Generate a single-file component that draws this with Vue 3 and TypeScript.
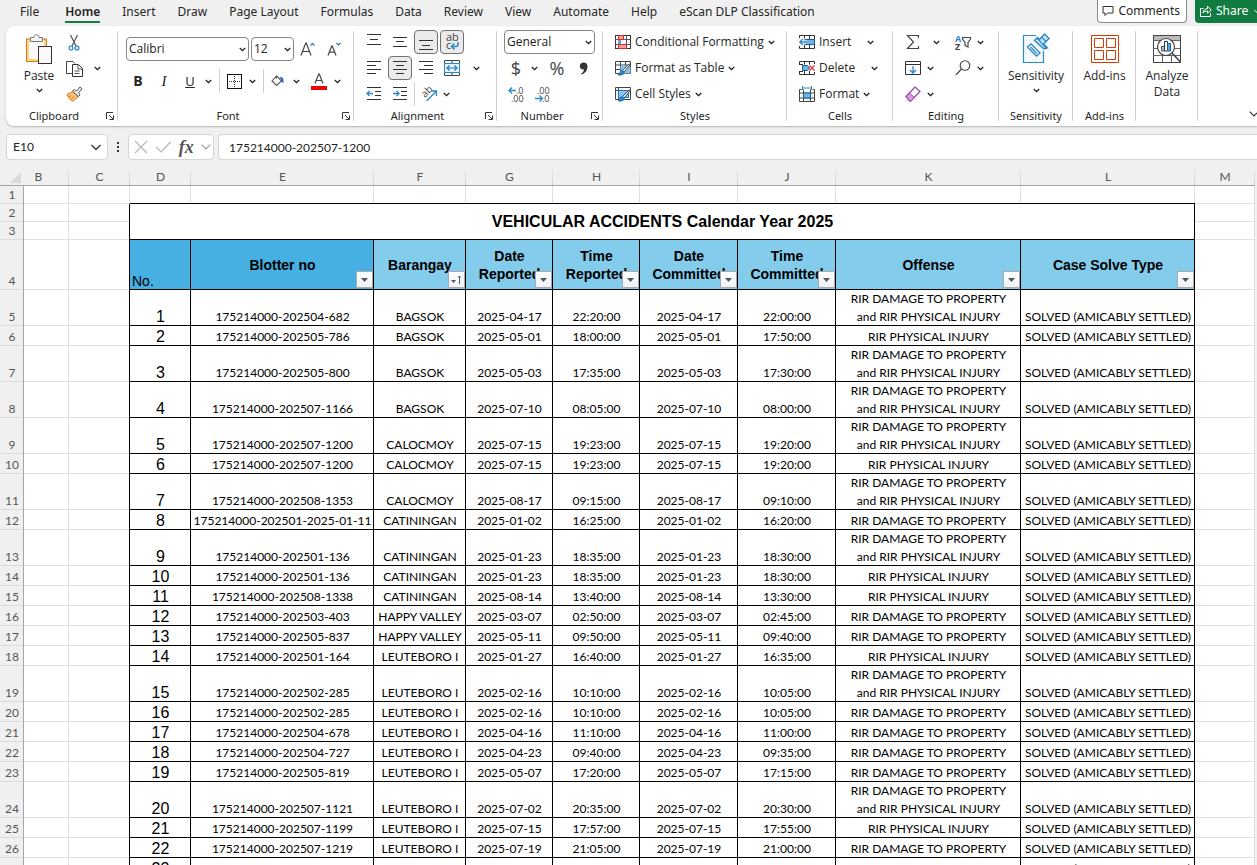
<script setup lang="ts">
import { ref } from 'vue'

interface Accident {
  no: number
  blotter: string
  barangay: string
  dateReported: string
  timeReported: string
  dateCommitted: string
  timeCommitted: string
  offense: string
  solve: string
}

const tabs = ['File', 'Home', 'Insert', 'Draw', 'Page Layout', 'Formulas', 'Data', 'Review', 'View', 'Automate', 'Help', 'eScan DLP Classification']
const activeTab = ref('Home')

const fontName = ref('Calibri')
const fontSize = ref('12')
const numberFormat = ref('General')
const nameBox = ref('E10')
const formula = ref('175214000-202507-1200')

const letters = ['B', 'C', 'D', 'E', 'F', 'G', 'H', 'I', 'J', 'K', 'L', 'M']

const headings = [
  { lines: ['Blotter no'], strong: true, sorted: false },
  { lines: ['Barangay'], strong: false, sorted: true },
  { lines: ['Date', 'Reported'], strong: false, sorted: false },
  { lines: ['Time', 'Reported'], strong: false, sorted: false },
  { lines: ['Date', 'Committed'], strong: false, sorted: false },
  { lines: ['Time', 'Committed'], strong: false, sorted: false },
  { lines: ['Offense'], strong: false, sorted: false },
  { lines: ['Case Solve Type'], strong: false, sorted: false },
]

const DAMAGE = 'RIR DAMAGE TO PROPERTY'
const INJURY = 'RIR PHYSICAL INJURY'
const BOTH = 'RIR DAMAGE TO PROPERTY\nand RIR PHYSICAL INJURY'
const SOLVED = 'SOLVED (AMICABLY SETTLED)'

const source: [string, string, string, string, string, string, string][] = [
  ['175214000-202504-682', 'BAGSOK', '2025-04-17', '22:20:00', '2025-04-17', '22:00:00', BOTH],
  ['175214000-202505-786', 'BAGSOK', '2025-05-01', '18:00:00', '2025-05-01', '17:50:00', INJURY],
  ['175214000-202505-800', 'BAGSOK', '2025-05-03', '17:35:00', '2025-05-03', '17:30:00', BOTH],
  ['175214000-202507-1166', 'BAGSOK', '2025-07-10', '08:05:00', '2025-07-10', '08:00:00', BOTH],
  ['175214000-202507-1200', 'CALOCMOY', '2025-07-15', '19:23:00', '2025-07-15', '19:20:00', BOTH],
  ['175214000-202507-1200', 'CALOCMOY', '2025-07-15', '19:23:00', '2025-07-15', '19:20:00', INJURY],
  ['175214000-202508-1353', 'CALOCMOY', '2025-08-17', '09:15:00', '2025-08-17', '09:10:00', BOTH],
  ['175214000-202501-2025-01-11', 'CATININGAN', '2025-01-02', '16:25:00', '2025-01-02', '16:20:00', DAMAGE],
  ['175214000-202501-136', 'CATININGAN', '2025-01-23', '18:35:00', '2025-01-23', '18:30:00', BOTH],
  ['175214000-202501-136', 'CATININGAN', '2025-01-23', '18:35:00', '2025-01-23', '18:30:00', INJURY],
  ['175214000-202508-1338', 'CATININGAN', '2025-08-14', '13:40:00', '2025-08-14', '13:30:00', INJURY],
  ['175214000-202503-403', 'HAPPY VALLEY', '2025-03-07', '02:50:00', '2025-03-07', '02:45:00', DAMAGE],
  ['175214000-202505-837', 'HAPPY VALLEY', '2025-05-11', '09:50:00', '2025-05-11', '09:40:00', DAMAGE],
  ['175214000-202501-164', 'LEUTEBORO I', '2025-01-27', '16:40:00', '2025-01-27', '16:35:00', INJURY],
  ['175214000-202502-285', 'LEUTEBORO I', '2025-02-16', '10:10:00', '2025-02-16', '10:05:00', BOTH],
  ['175214000-202502-285', 'LEUTEBORO I', '2025-02-16', '10:10:00', '2025-02-16', '10:05:00', DAMAGE],
  ['175214000-202504-678', 'LEUTEBORO I', '2025-04-16', '11:10:00', '2025-04-16', '11:00:00', DAMAGE],
  ['175214000-202504-727', 'LEUTEBORO I', '2025-04-23', '09:40:00', '2025-04-23', '09:35:00', DAMAGE],
  ['175214000-202505-819', 'LEUTEBORO I', '2025-05-07', '17:20:00', '2025-05-07', '17:15:00', DAMAGE],
  ['175214000-202507-1121', 'LEUTEBORO I', '2025-07-02', '20:35:00', '2025-07-02', '20:30:00', BOTH],
  ['175214000-202507-1199', 'LEUTEBORO I', '2025-07-15', '17:57:00', '2025-07-15', '17:55:00', INJURY],
  ['175214000-202507-1219', 'LEUTEBORO I', '2025-07-19', '21:05:00', '2025-07-19', '21:00:00', DAMAGE],
  ['', '', '', '', '', '', ''],
]

const accidents: Accident[] = source.map((r, i) => ({
  no: i + 1,
  blotter: r[0],
  barangay: r[1],
  dateReported: r[2],
  timeReported: r[3],
  dateCommitted: r[4],
  timeCommitted: r[5],
  offense: r[6],
  solve: SOLVED,
}))
</script>

<template>
  <div class="app">
    <svg class="sprite" aria-hidden="true">
      <symbol id="chev" viewBox="0 0 7 5"><path d="M.8 1 3.5 3.7 6.2 1" fill="none" stroke="#222" stroke-width="1.3" /></symbol>
      <symbol id="launch" viewBox="0 0 8 8"><path d="M.5 7V.5H7M3 3l4 4M7.5 3.5v4h-4" fill="none" stroke="#333" /></symbol>
      <symbol id="brush" viewBox="0 0 16 16">
        <path d="M15.5 4.5 9 12 7.5 10.5 14 4.2z" fill="#fff" stroke="#444" />
        <path d="M3 14.8c2-.3 1.6-3.4 3.6-4.1 1.5-.4 2.8.8 2.5 2.2-.4 2-3.8 2.8-6.1 1.9z" fill="#2b88c8" stroke="#1467ab" stroke-width=".8" />
      </symbol>
    </svg>

    <header class="tabbar">
      <nav class="tabs" aria-label="Ribbon tabs">
        <button v-for="t in tabs" :key="t" class="tab" :class="{ active: t === activeTab }" @click="activeTab = t">{{ t }}</button>
      </nav>
      <div class="tabactions">
        <button class="comments">
          <svg width="12" height="12" viewBox="0 0 12 12"><path d="M1 1.5h10v6.500H5.500L3 10.500V8H1z" fill="none" stroke="#333" /></svg>
          Comments
        </button>
        <button class="share">
          <svg width="12" height="12" viewBox="0 0 12 12"><path d="M3.500 3.500h-3v8h10V8M3 8c.3-3 2-4.300 4.500-4.300V1.300L11.300 5 7.500 8.300V6C5.500 6 4 6.500 3 8z" fill="none" stroke="#fff" /></svg>
          Share
          <svg class="sharemore" width="7" height="5" viewBox="0 0 7 5"><path d="M.5 1l3 3 3-3" fill="none" stroke="#fff" /></svg>
        </button>
      </div>
    </header>

    <div class="ribbon">
      <section class="group g-clip" aria-label="Clipboard">
        <div class="body cols">
          <button class="big paste">
            <svg width="28" height="30" viewBox="0 0 28 30">
              <rect x="1.500" y="5" width="20" height="22.500" fill="#fbd48c" stroke="#e07a10" />
              <rect x="4" y="7" width="15" height="18" fill="#fafafa" />
              <path d="M5.500 7.500v-4h3.500c.3-2 1.200-2.800 2.500-2.800s2.200.8 2.500 2.800h3.500v4z" fill="#f5f5f5" stroke="#777" />
              <rect x="13.500" y="12.500" width="13" height="17" fill="#fafafa" stroke="#333" />
            </svg>
            <span>Paste</span>
            <svg class="chev" width="7" height="5"><use href="#chev" /></svg>
          </button>
          <div class="stack">
            <div class="row">
              <button class="ib" aria-label="Cut">
                <svg width="12" height="17" viewBox="0 0 12 17"><path d="M2.500 1l5.500 11M9.500 1L4 12" stroke="#555" stroke-width="1.200" fill="none" /><circle cx="3" cy="14" r="1.900" fill="none" stroke="#2b88c8" stroke-width="1.300" /><circle cx="9" cy="14" r="1.900" fill="none" stroke="#2b88c8" stroke-width="1.300" /></svg>
              </button>
            </div>
            <div class="row">
              <button class="ib" aria-label="Copy">
                <svg width="17" height="17" viewBox="0 0 17 17"><path d="M6 13.500H.5v-12h6.500l2 2" fill="none" stroke="#444" /><path d="M6.500 4.500h6l4 4v8h-10z" fill="#fff" stroke="#333" /><path d="M12 4.500V9h4.500M8.500 11h5M8.500 13.500h5" fill="none" stroke="#555" /></svg>
              </button>
              <button class="cb lead" aria-label="Copy options"><svg class="chev" width="7" height="5"><use href="#chev" /></svg></button>
            </div>
            <div class="row">
              <button class="ib" aria-label="Format Painter">
                <svg width="17" height="16" viewBox="0 0 17 16"><path d="M1 8.500l6-3 5 5.500-5.500 4.500c-1.500-1-4-3.500-5.500-7z" fill="#fbc27a" stroke="#dd7711" /><path d="M3 11l2-1.500M5 13.500l3-3" stroke="#dd7711" /><path d="M6.500 5l1.800-1.500 2.200 1.500L14 1l2 1.700-3.300 4L14 9l-1.700 1.500z" fill="#eee" stroke="#555" /></svg>
              </button>
            </div>
          </div>
        </div>
        <div class="foot has"><span>Clipboard</span><button class="launch" aria-label="Clipboard settings"><svg width="8" height="8"><use href="#launch" /></svg></button></div>
      </section>

      <section class="group g-font" aria-label="Font">
        <div class="body two">
          <div class="row">
            <div class="drop w-font"><select v-model="fontName" aria-label="Font name"><option>Calibri</option><option>Arial</option></select><svg class="chev" width="7" height="5"><use href="#chev" /></svg></div>
            <div class="drop w-size"><select v-model="fontSize" aria-label="Font size"><option>12</option><option>14</option></select><svg class="chev" width="7" height="5"><use href="#chev" /></svg></div>
            <button class="ib" aria-label="Increase font size"><svg width="16" height="16" viewBox="0 0 16 16"><path d="M1 14.500L5.700 2h.6L11 14.500M2.700 10.500h6.600" fill="none" stroke="#444" stroke-width="1.200" /><path d="M10.500 4.500l2-2 2 2" fill="none" stroke="#2b88c8" stroke-width="1.300" /></svg></button>
            <button class="ib" aria-label="Decrease font size"><svg width="14" height="14" viewBox="0 0 14 14"><path d="M1 13.500L4.700 4h.6L9 13.500M2.300 10.200h5.400" fill="none" stroke="#444" stroke-width="1.200" /><path d="M9.500 1l2 2 2-2" fill="none" stroke="#2b88c8" stroke-width="1.300" /></svg></button>
          </div>
          <div class="row">
            <button class="ib glyph b">B</button>
            <button class="ib glyph i">I</button>
            <button class="ib glyph u">U</button>
            <button class="cb" aria-label="Underline options"><svg class="chev" width="7" height="5"><use href="#chev" /></svg></button>
            <i class="sep"></i>
            <button class="ib" aria-label="Borders"><svg width="15" height="15" viewBox="0 0 15 15" shape-rendering="crispEdges"><rect x=".5" y=".5" width="14" height="14" fill="#fff" stroke="#111" /><path d="M7.500 2v12M2 7.500h12" stroke="#333" stroke-dasharray="1 1" /></svg></button>
            <button class="cb" aria-label="Border options"><svg class="chev" width="7" height="5"><use href="#chev" /></svg></button>
            <i class="sep"></i>
            <button class="ib" aria-label="Fill color"><svg width="14" height="16" viewBox="0 0 14 16"><path d="M5.500 2.500v3M5.500 3L1 8l4.500 4.500L10.500 8 6 3.200z" fill="#fff" stroke="#555" stroke-width="1.100" /><path d="M8.500 4c2-.5 4 .5 4 3.500v2.500c-2-.3-2.300-2-2.300-3.500z" fill="#1b6ec2" /></svg></button>
            <button class="cb" aria-label="Fill options"><svg class="chev" width="7" height="5"><use href="#chev" /></svg></button>
            <button class="ib lead" aria-label="Font color"><svg width="16" height="17" viewBox="0 0 16 17"><path d="M4 10.500L7.700 1h.6L12 10.500M5.300 7.500h5.400" fill="none" stroke="#444" stroke-width="1.200" /><rect y="13" width="16" height="4" fill="#f00000" /></svg></button>
            <button class="cb" aria-label="Font color options"><svg class="chev" width="7" height="5"><use href="#chev" /></svg></button>
          </div>
        </div>
        <div class="foot has"><span>Font</span><button class="launch" aria-label="Font settings"><svg width="8" height="8"><use href="#launch" /></svg></button></div>
      </section>

      <section class="group g-align" aria-label="Alignment">
        <div class="body">
          <div class="row">
            <button class="ib" aria-label="Top align"><svg width="16" height="16" viewBox="0 0 16 16"><path d="M1 .5h14M4 5.500h8M1 10.500h14" stroke="#333" /></svg></button>
            <button class="ib" aria-label="Middle align"><svg width="16" height="16" viewBox="0 0 16 16"><path d="M1 3.500h14M4 7.500h8M1 12.500h14" stroke="#333" /></svg></button>
            <button class="ib on" aria-label="Bottom align"><svg width="16" height="16" viewBox="0 0 16 16"><path d="M1 6.500h14M4 11.500h8M1 15.500h14" stroke="#333" /></svg></button>
            <button class="ib on" aria-label="Wrap text">
              <svg width="16" height="18" viewBox="0 0 16 18"><text x="2" y="8" class="mini" font-size="11">ab</text><text x="2" y="16" class="mini" font-size="11">c</text><path d="M14 9v2.500c0 1.500-1 2-2.500 2H8M10.500 10.500l-3 3 3 3" fill="none" stroke="#2b88c8" stroke-width="1.500" /></svg>
            </button>
          </div>
          <div class="row">
            <button class="ib" aria-label="Align left"><svg width="16" height="16" viewBox="0 0 16 16"><path d="M1 1.500h14M1 5.500h9M1 9.500h14M1 13.500h9" stroke="#333" /></svg></button>
            <button class="ib on" aria-label="Center"><svg width="16" height="16" viewBox="0 0 16 16"><path d="M1 1.500h14M4 5.500h8M1 9.500h14M4 13.500h8" stroke="#333" /></svg></button>
            <button class="ib" aria-label="Align right"><svg width="16" height="16" viewBox="0 0 16 16"><path d="M1 1.500h14M6 5.500h9M1 9.500h14M6 13.500h9" stroke="#333" /></svg></button>
            <button class="ib" aria-label="Merge and center"><svg width="16" height="16" viewBox="0 0 16 16"><path d="M.5.500h15v15H.5zM8 .5v3M8 12.500v3" fill="#fff" stroke="#444" /><rect x=".5" y="3.500" width="15" height="9" fill="#e6f2fb" stroke="#2b88c8" /><path d="M3 8h10M5.500 5.500L3 8l2.500 2.500M10.500 5.500L13 8l-2.500 2.500" fill="none" stroke="#1b78c2" stroke-width="1.200" /></svg></button>
            <button class="cb wide" aria-label="Merge options"><svg class="chev" width="7" height="5"><use href="#chev" /></svg></button>
          </div>
          <div class="row">
            <button class="ib" aria-label="Decrease indent"><svg width="16" height="16" viewBox="0 0 16 16"><path d="M1 1.500h14M9 5.500h6M9 9.500h6M1 13.500h14" stroke="#333" /><path d="M1 7.500h6M3.500 5L1 7.500 3.500 10" fill="none" stroke="#2b88c8" stroke-width="1.300" /></svg></button>
            <button class="ib" aria-label="Increase indent"><svg width="16" height="16" viewBox="0 0 16 16"><path d="M1 1.500h14M9 5.500h6M9 9.500h6M1 13.500h14" stroke="#333" /><path d="M1 7.500h6M4.500 5L7 7.500 4.500 10" fill="none" stroke="#2b88c8" stroke-width="1.300" /></svg></button>
            <i class="sep tight"></i>
            <button class="ib narrow" aria-label="Orientation"><svg width="16" height="16" viewBox="0 0 16 16"><text class="mini" font-size="10" transform="translate(4 12) rotate(-45)">ab</text><path d="M5.500 15L15 5.500M10.500 5h5v5" fill="none" stroke="#2b88c8" stroke-width="1.300" /></svg></button>
            <button class="cb" aria-label="Orientation options"><svg class="chev" width="7" height="5"><use href="#chev" /></svg></button>
          </div>
        </div>
        <div class="foot has"><span>Alignment</span><button class="launch" aria-label="Alignment settings"><svg width="8" height="8"><use href="#launch" /></svg></button></div>
      </section>

      <section class="group g-num" aria-label="Number">
        <div class="body">
          <div class="row">
            <div class="drop w-num"><select v-model="numberFormat" aria-label="Number format"><option>General</option><option>Text</option></select><svg class="chev" width="7" height="5"><use href="#chev" /></svg></div>
          </div>
          <div class="row">
            <button class="ib glyph sym">$</button>
            <button class="cb" aria-label="Currency options"><svg class="chev" width="7" height="5"><use href="#chev" /></svg></button>
            <button class="ib glyph sym lead">%</button>
            <button class="ib" aria-label="Comma style"><svg width="9" height="13" viewBox="0 0 9 13"><path d="M4.500.500C7 .5 8.500 2 8.500 4.500c0 4-2.500 7-6 8l-.5-.8C4 10.500 5 9 5 7.500 2.500 8 .8 6.500.8 4.300.8 2 2.500.5 4.500.5z" fill="#333" /></svg></button>
          </div>
          <div class="row">
            <button class="ib" aria-label="Increase decimal"><svg width="16" height="16" viewBox="0 0 16 16"><text x="8" y="8" class="mini" font-size="9">.0</text><text x="3" y="16" class="mini" font-size="9">.00</text><path d="M1 4.500h7M4 1.500l-3 3 3 3" fill="none" stroke="#2b88c8" stroke-width="1.300" /></svg></button>
            <button class="ib" aria-label="Decrease decimal"><svg width="16" height="16" viewBox="0 0 16 16"><text x="3" y="8" class="mini" font-size="9">.00</text><text x="8" y="16" class="mini" font-size="9">.0</text><path d="M1 12.500h7M5.500 9.500l3 3-3 3" fill="none" stroke="#2b88c8" stroke-width="1.300" /></svg></button>
          </div>
        </div>
        <div class="foot has"><span>Number</span><button class="launch" aria-label="Number settings"><svg width="8" height="8"><use href="#launch" /></svg></button></div>
      </section>

      <section class="group g-styles" aria-label="Styles">
        <div class="body">
          <div class="row">
            <button class="lb">
              <svg width="16" height="14" viewBox="0 0 16 14" shape-rendering="crispEdges"><rect x=".5" y=".5" width="15" height="13" fill="#fff" stroke="#333" /><path d="M3.500 0v14M11.500 0v14M0 4.500h16M0 9.500h16" stroke="#555" fill="none" /><rect x="4" y="5" width="7" height="4" fill="#fff" /><rect x="3.500" y=".5" width="5" height="4" fill="#f6a0a0" stroke="#d92b2b" /><rect x="3" y="5" width="3" height="4" fill="#5aa7e0" /><rect x="3.500" y="9.500" width="8" height="4" fill="#f6a0a0" stroke="#d92b2b" /></svg>
              <span>Conditional Formatting</span><svg class="chev" width="7" height="5"><use href="#chev" /></svg>
            </button>
          </div>
          <div class="row">
            <button class="lb">
              <svg width="16" height="16" viewBox="0 0 16 16"><path d="M.5 1.500h15v12H.5zM.5 5h15M.5 9.500h15M5.500 1.500v12M10.500 1.500v12" fill="#fff" stroke="#444" /><path d="M5.500 5.500h10v8h-10z" fill="#8cc3ee" /><use href="#brush" width="16" height="16" /></svg>
              <span>Format as Table</span><svg class="chev" width="7" height="5"><use href="#chev" /></svg>
            </button>
          </div>
          <div class="row">
            <button class="lb">
              <svg width="16" height="16" viewBox="0 0 16 16"><path d="M.5 1.500h15v12H.5z" fill="#fff" stroke="#444" /><path d="M.5 4.500h15M3.500 1.500v12" stroke="#444" /><path d="M3.500 4.500h10v7h-10z" fill="#8cc3ee" stroke="#1b78c2" /><use href="#brush" width="16" height="16" /></svg>
              <span>Cell Styles</span><svg class="chev" width="7" height="5"><use href="#chev" /></svg>
            </button>
          </div>
        </div>
        <div class="foot"><span>Styles</span></div>
      </section>

      <section class="group g-cells" aria-label="Cells">
        <div class="body">
          <div class="row">
            <button class="lb"><svg width="16" height="14" viewBox="0 0 16 14"><path d="M.5 3V.5h15v13H.5V11M5.500.5v3M10.500.5v13M5.500 10v3.500M6 4.500h9.500M6 9.500h9.500" fill="none" stroke="#333" /><rect x="6" y="4.500" width="9.500" height="5" fill="#6db3e8" stroke="#1b5e9c" /><path d="M1 7h7M4 4L1 7l3 3" fill="none" stroke="#fff" stroke-width="3" /><path d="M.8 7H8M3.800 4L.8 7l3 3" fill="none" stroke="#2b88c8" stroke-width="1.300" /></svg><span>Insert</span></button>
            <button class="cb after" aria-label="Insert options"><svg class="chev" width="7" height="5"><use href="#chev" /></svg></button>
          </div>
          <div class="row">
            <button class="lb"><svg width="16" height="14" viewBox="0 0 16 14"><path d="M.5 3V.5h15V3M.5 11v2.500h15V11M5.500.5v3M10.500.5v3M5.500 10v3.500M10.500 10v3.500M0 3.500h4M0 10.500h4" fill="none" stroke="#333" /><path d="M3.500 4.500h5l2 2.500-2 2.500h-5z" fill="#6db3e8" stroke="#1b5e9c" /><path d="M10.500 4.500l5 5M15.500 4.500l-5 5" stroke="#e23b3b" stroke-width="1.400" /></svg><span>Delete</span></button>
            <button class="cb after" aria-label="Delete options"><svg class="chev" width="7" height="5"><use href="#chev" /></svg></button>
          </div>
          <div class="row">
            <button class="lb"><svg width="16" height="16" viewBox="0 0 16 16"><path d="M2.500 3.500H.5v12h15v-12h-2M.5 7h15M.5 12h15M4.500 3.500v12M11.500 3.500v12" fill="none" stroke="#444" /><rect x="4.500" y="7" width="7" height="5" fill="#6db3e8" stroke="#1b5e9c" /><path d="M3.500 0v4M12.500 0v4M3.500 2h9" stroke="#2b88c8" fill="none" /></svg><span>Format</span><svg class="chev" width="7" height="5"><use href="#chev" /></svg></button>
          </div>
        </div>
        <div class="foot"><span>Cells</span></div>
      </section>

      <section class="group g-edit" aria-label="Editing">
        <div class="body">
          <div class="row">
            <button class="ib narrow" aria-label="AutoSum"><svg width="14" height="16" viewBox="0 0 14 16"><path d="M12.500 4V1.500H1.500L7.500 8l-6 6.500h11V12" fill="none" stroke="#444" stroke-width="1.200" /></svg></button>
            <button class="cb sumc" aria-label="AutoSum options"><svg class="chev" width="7" height="5"><use href="#chev" /></svg></button>
            <button class="ib narrow far" aria-label="Sort and filter"><svg width="18" height="17" viewBox="0 0 18 17"><text x="1" y="8" class="mini az" font-size="9">A</text><text x="1" y="16" class="mini zz" font-size="9">Z</text><path d="M8.500 3.500h8v1.500L14 8.500v4.500l-3-1.500v-3L8.500 5z" fill="none" stroke="#444" stroke-width="1.200" /></svg></button>
            <button class="cb" aria-label="Sort options"><svg class="chev" width="7" height="5"><use href="#chev" /></svg></button>
          </div>
          <div class="row">
            <button class="ib narrow" aria-label="Fill"><svg width="16" height="14" viewBox="0 0 16 14"><path d="M.5.500h15v13H.5zM.5 3.500h15" fill="#fff" stroke="#333" /><path d="M8 5v7M5 9l3 3 3-3" fill="none" stroke="#2b88c8" stroke-width="1.300" /></svg></button>
            <button class="cb" aria-label="Fill down options"><svg class="chev" width="7" height="5"><use href="#chev" /></svg></button>
            <button class="ib narrow far2" aria-label="Find and select"><svg width="16" height="16" viewBox="0 0 16 16"><circle cx="10" cy="5.500" r="4.800" fill="none" stroke="#444" stroke-width="1.100" /><path d="M6.500 9L.8 15" stroke="#444" stroke-width="1.200" /></svg></button>
            <button class="cb" aria-label="Find options"><svg class="chev" width="7" height="5"><use href="#chev" /></svg></button>
          </div>
          <div class="row">
            <button class="ib narrow" aria-label="Clear"><svg width="16" height="16" viewBox="0 0 16 16"><path d="M1 10.500L10 1l5 4.500-9 9.500H4.500z" fill="#fff" stroke="#9b3fa5" stroke-width="1.200" /><path d="M1.200 10.500L4.500 7l4.800 4.500L6 15H4.700z" fill="#d79be0" stroke="#9b3fa5" /></svg></button>
            <button class="cb" aria-label="Clear options"><svg class="chev" width="7" height="5"><use href="#chev" /></svg></button>
          </div>
        </div>
        <div class="foot"><span>Editing</span></div>
      </section>

      <section class="group g-sens" aria-label="Sensitivity">
        <div class="body">
          <button class="big">
            <svg width="28" height="30" viewBox="0 0 28 30"><path d="M14 1.500H1.500v27h20V17" fill="#f3f9fd" stroke="#2b88c8" stroke-width="1.200" /><path d="M5.500 13l3.500-3 9 9-3.500 3zM8.500 13l6.500 6.500" fill="#fff" stroke="#2b88c8" stroke-width="1.300" /><path d="M12.500 6.500l3-3 2 2L22.500 0l4.500 4.500-5.500 5.500 4 4-3.500 1z" fill="#cfe6f7" stroke="#2b88c8" stroke-width="1.400" /><path d="M15 4l9 10M19.500 3l4.500 4.500" fill="none" stroke="#2b88c8" stroke-width="1.200" /></svg>
            <span>Sensitivity</span>
            <svg class="chev" width="7" height="5"><use href="#chev" /></svg>
          </button>
        </div>
        <div class="foot"><span>Sensitivity</span></div>
      </section>

      <section class="group g-add" aria-label="Add-ins">
        <div class="body">
          <button class="big">
            <svg width="28" height="30" viewBox="0 0 28 30"><path d="M.5 1.500h27v27H.5zM3.500 4.500h9v9h-9zM15.500 4.500h9v9h-9zM3.500 16.500h9v9h-9zM15.500 16.500h9v9h-9z" fill="#fff" stroke="#d83b01" /></svg>
            <span>Add-ins</span>
          </button>
        </div>
        <div class="foot"><span>Add-ins</span></div>
      </section>

      <section class="group g-an" aria-label="Analysis">
        <div class="body">
          <button class="big">
            <svg width="28" height="30" viewBox="0 0 28 30"><rect x=".5" y="1.500" width="27" height="27" fill="#fff" stroke="#444" /><path d="M1 2h26v4H1z" fill="#bbb" /><path d="M.5 6.500h27M.5 14.500h27M.5 21.500h27M9.500 21v7M18.500 21v7" stroke="#666" /><circle cx="13" cy="13" r="8.500" fill="#fff" stroke="#444" stroke-width="1.200" /><path d="M19 19l8.500 9" stroke="#444" stroke-width="1.500" /><path d="M8.500 12.500h3V17h-3z" fill="#bbb" stroke="#555" /><path d="M11.500 7.500h3V17h-3z" fill="#fff" stroke="#333" /><path d="M14.500 9.500h3V17h-3z" fill="#5aa7e0" stroke="#1b5e9c" /></svg>
            <span>Analyze<br />Data</span>
          </button>
        </div>
        <div class="foot"></div>
      </section>
      <button class="collapse" aria-label="Collapse ribbon"><svg width="10" height="6" viewBox="0 0 10 6"><path d="M.7.700L5 5 9.300.7" fill="none" stroke="#333" stroke-width="1.200" /></svg></button>
    </div>

    <div class="formulabar">
      <div class="namebox">
        <input v-model="nameBox" aria-label="Name box" />
        <button aria-label="Name list"><svg width="12" height="7" viewBox="0 0 12 7"><path d="M1.500 1L6 5.500 10.500 1" fill="none" stroke="#333" stroke-width="1.300" /></svg></button>
      </div>
      <svg class="dots" width="2" height="12" viewBox="0 0 2 12"><path d="M0 1h2v2H0zM0 5h2v2H0zM0 9h2v2H0z" fill="#333" /></svg>
      <div class="fx">
        <button aria-label="Cancel"><svg width="14" height="14" viewBox="0 0 14 14"><path d="M1 1l12 12M13 1L1 13" stroke="#b5b5b5" stroke-width="1.100" /></svg></button>
        <button aria-label="Enter"><svg width="16" height="12" viewBox="0 0 16 12"><path d="M1 6l5 5L15.500 1" fill="none" stroke="#b5b5b5" stroke-width="1.200" /></svg></button>
        <button class="fxi">fx</button>
        <button aria-label="Function list"><svg width="10" height="6" viewBox="0 0 10 6"><path d="M.7.700L5 5 9.300.7" fill="none" stroke="#999" stroke-width="1.100" /></svg></button>
      </div>
      <input v-model="formula" class="formula" aria-label="Formula" />
    </div>

    <main class="sheetwrap">
      <table class="sheet">
        <colgroup>
          <col class="w-rh" /><col class="w-b" /><col class="w-c" /><col class="w-d" /><col class="w-e" /><col class="w-f" /><col class="w-g" /><col class="w-g" /><col class="w-i" /><col class="w-i" /><col class="w-k" /><col class="w-l" /><col />
        </colgroup>
        <thead>
          <tr class="letters">
            <th class="corner"><svg width="11" height="11" viewBox="0 0 11 11"><path d="M11 0v11H0z" fill="#d9d9d9" /></svg></th>
            <th v-for="l in letters" :key="l" scope="col" :class="{ partial: l === 'B' }">{{ l }}</th>
          </tr>
        </thead>
        <tbody>
          <tr class="h18"><th class="rh" scope="row">1</th><td v-for="l in letters" :key="l" :class="{ over: l !== 'B' && l !== 'C' && l !== 'M' }"></td></tr>
          <tr class="h18">
            <th class="rh" scope="row">2</th><td></td><td class="edge"></td>
            <td class="title" colspan="9" rowspan="2">VEHICULAR ACCIDENTS Calendar Year 2025</td><td></td>
          </tr>
          <tr class="h18"><th class="rh" scope="row">3</th><td></td><td class="edge"></td><td></td></tr>
          <tr class="h50">
            <th class="rh" scope="row">4</th><td></td><td class="edge"></td>
            <td class="k head strong no">No.</td>
            <td v-for="(h, i) in headings" :key="i" class="k head" :class="{ strong: h.strong }">
              <div v-for="line in h.lines" :key="line">{{ line }}</div>
              <button class="filter" :aria-label="'Filter ' + h.lines.join(' ')">
                <svg v-if="h.sorted" width="11" height="10" viewBox="0 0 11 10"><path d="M0 5h5L2.500 8z" fill="#555" /><path d="M8.500 9V1M7 2.500L8.500 1 10 2.500" fill="none" stroke="#555" /></svg>
                <svg v-else width="7" height="4" viewBox="0 0 7 4"><path d="M0 0h7L3.500 4z" fill="#555" /></svg>
              </button>
            </td>
            <td></td>
          </tr>
          <tr v-for="a in accidents" :key="a.no" :class="a.offense.includes('\n') ? 'h36' : 'h20'">
            <th class="rh" scope="row">{{ a.no + 4 }}</th><td></td><td class="edge"></td>
            <td class="k num">{{ a.no }}</td>
            <td class="k">{{ a.blotter }}</td>
            <td class="k">{{ a.barangay }}</td>
            <td class="k">{{ a.dateReported }}</td>
            <td class="k">{{ a.timeReported }}</td>
            <td class="k">{{ a.dateCommitted }}</td>
            <td class="k">{{ a.timeCommitted }}</td>
            <td class="k pre">{{ a.offense }}</td>
            <td class="k">{{ a.solve }}</td>
            <td></td>
          </tr>
        </tbody>
      </table>
    </main>
  </div>
</template>

<style>
body {
  margin: 0;
  overflow: hidden;
}
</style>

<style scoped>
.app {
  height: 100vh;
  overflow: hidden;
  display: flex;
  flex-direction: column;
  background: #f0f0f0;
  color: #262626;
  font: 12px/16px "Noto Sans", "Open Sans", sans-serif;
}
.app * {
  box-sizing: border-box;
}
.sprite {
  position: absolute;
  width: 0;
  height: 0;
}
button {
  border: 0;
  padding: 0;
  margin: 0;
  background: none;
  font: inherit;
  color: inherit;
  white-space: nowrap;
}
svg {
  flex: none;
  overflow: visible;
}
.mini {
  font-family: "Open Sans", sans-serif;
  fill: #444;
}
.az {
  fill: #2b88c8;
  font-weight: 700;
}
.zz {
  font-weight: 700;
}

/* tabs */
.tabbar {
  flex: none;
  height: 26px;
  display: flex;
  justify-content: space-between;
  align-items: flex-start;
}
.tabs {
  display: flex;
  gap: 22px;
  padding: 2px 0 0 20px;
}
.tab {
  height: 21px;
  line-height: 19px;
  border-bottom: 2px solid transparent;
}
.tab:first-child {
  margin-right: 4px;
}
.tab.active {
  font-weight: 600;
  border-bottom-color: #107c41;
}
.tabactions {
  display: flex;
  gap: 8px;
}
.comments,
.share {
  height: 23px;
  display: flex;
  align-items: center;
  gap: 4px;
  padding: 0 6px 0 4px;
  border: 1px solid #8a8a8a;
  border-top: 0;
  border-radius: 0 0 4px 4px;
  background: #fff;
}
.share {
  width: 62px;
  overflow: hidden;
  border-color: #107c41;
  border-right: 0;
  border-radius: 0 0 0 4px;
  background: #107c41;
  color: #fff;
}
.sharemore {
  margin-left: 2px;
}

/* ribbon */
.ribbon {
  flex: none;
  height: 100px;
  margin-left: 6px;
  display: flex;
  background: #fff;
  border-radius: 8px 0 0 8px;
  box-shadow: 0 1px 2px rgba(0, 0, 0, 0.25);
  padding-top: 3px;
  font-family: "Open Sans", "Noto Sans", sans-serif;
}
.group {
  flex: none;
  display: flex;
  flex-direction: column;
  background: linear-gradient(#d0d0d0, #d0d0d0) right 2px / 1px 90px no-repeat;
}
.g-clip { width: 112px; }
.g-font { width: 236px; }
.g-align { width: 143px; }
.g-num { width: 106px; }
.g-styles { width: 184px; }
.g-cells { width: 106px; }
.g-edit { width: 106px; }
.g-sens { width: 74px; }
.g-add { width: 63px; }
.g-an { width: 62px; }
.body {
  height: 78px;
  display: flex;
  flex-direction: column;
}
.body.cols {
  flex-direction: row;
}
.body.two {
  padding: 4px 0 0 7px;
}
.two .row {
  height: 32px;
}
.g-align .body {
  padding-left: 7px;
}
.g-num .body {
  padding-left: 6px;
}
.g-styles .body,
.g-cells .body {
  padding-left: 12px;
}
.g-edit .body {
  padding-left: 8px;
}
.row {
  height: 26px;
  display: flex;
  align-items: center;
}
.stack {
  padding-left: 1px;
}
.ib {
  flex: none;
  width: 26px;
  height: 26px;
  display: flex;
  align-items: center;
  justify-content: center;
}
.ib.narrow {
  width: 24px;
}
.ib.on {
  width: 24px;
  height: 24px;
  margin: 1px;
  border: 1px solid #707070;
  border-radius: 4px;
  background: #ebebeb;
}
.cb {
  flex: none;
  width: 10px;
  height: 24px;
  display: flex;
  align-items: center;
  justify-content: center;
}
.cb.wide {
  width: 22px;
}
.lead {
  margin-left: 5px;
}
.sep {
  width: 1px;
  height: 24px;
  margin: 0 1px 0 6px;
  background: #d0d0d0;
}
.sep.tight {
  margin: 0 2px 0 1px;
}
.sumc {
  margin-left: 6px;
}
.far {
  margin-left: 10px;
}
.far2 {
  margin-left: 16px;
}
.after {
  margin-left: 14px;
}
.glyph {
  font-size: 14px;
}
.b { font-weight: 700; }
.i { font-family: "Liberation Serif", serif; font-style: italic; font-size: 15px; }
.u { text-decoration: underline; font-size: 13px; }
.sym { font-size: 18px; color: #444; }
.lb {
  height: 24px;
  display: flex;
  align-items: center;
  gap: 4px;
}
.big {
  width: 100%;
  display: flex;
  flex-direction: column;
  align-items: center;
  padding-top: 5px;
  gap: 4px;
}
.big span {
  line-height: 16px;
}
.big.paste {
  width: 54px;
  padding-left: 12px;
}
.foot {
  height: 18px;
  display: flex;
  align-items: center;
  justify-content: center;
  font: 11px/16px "Noto Sans", "Open Sans", sans-serif;
}
.foot.has span {
  flex: 1;
  text-align: center;
}
.launch {
  width: 16px;
  height: 16px;
  display: flex;
  align-items: center;
  justify-content: center;
}
.collapse {
  margin: 82px 0 0 auto;
  width: 8px;
  height: 8px;
  overflow: hidden;
  display: flex;
}
.drop {
  position: relative;
  height: 24px;
  margin: 0 1px;
}
.drop select {
  width: 100%;
  height: 24px;
  padding: 0 2px;
  appearance: none;
  border: 1px solid #868686;
  border-radius: 4px;
  background: #fff;
  color: #222;
  font: 12px/22px "Open Sans", sans-serif;
}
.drop svg {
  position: absolute;
  right: 3px;
  top: 10px;
  pointer-events: none;
}
.w-font { width: 123px; }
.w-size { width: 43px; }
.w-num { width: 91px; }

/* formula bar */
.formulabar {
  flex: none;
  display: flex;
  align-items: center;
  padding: 8px 0 4px 6px;
  font-family: Lato, sans-serif;
}
.formulabar button {
  display: flex;
  align-items: center;
}
.namebox,
.fx,
.formula {
  height: 26px;
  background: #fff;
  border: 1px solid #d6d6d6;
  border-radius: 4px;
}
.namebox {
  width: 102px;
  display: flex;
  align-items: center;
  padding-right: 5px;
}
.namebox input {
  flex: 1;
  min-width: 0;
  border: 0;
  padding: 0 6px;
  background: none;
  font: 12px/16px Lato, sans-serif;
  color: #222;
}
.dots {
  margin: 0 9px;
}
.fx {
  width: 86px;
  display: flex;
  align-items: center;
  justify-content: space-between;
  padding: 0 2px 0 5px;
}
.formulabar .fxi {
  font: italic 700 18px/20px "Liberation Serif", serif;
  color: #555;
}
.formula {
  flex: 1;
  min-width: 0;
  margin-left: 4px;
  padding: 0 10px;
  border-right: 0;
  border-radius: 4px 0 0 4px;
  font: 12px/16px Lato, sans-serif;
  color: #222;
}

/* sheet */
.sheetwrap {
  flex: 1;
  min-height: 0;
  overflow: hidden;
  padding-right: 2px;
}
.sheet {
  width: 100%;
  table-layout: fixed;
  border-collapse: collapse;
  font: 12px/18px Lato, sans-serif;
  color: #000;
}
.w-rh { width: 24px; }
.w-b { width: 45px; }
.w-c { width: 61px; }
.w-d { width: 61px; }
.w-e { width: 183px; }
.w-f { width: 92px; }
.w-g { width: 87px; }
.w-i { width: 98px; }
.w-k { width: 185px; }
.w-l { width: 174px; }
.h18 { height: 18px; }
.h20 { height: 20px; }
.h36 { height: 36px; }
.h50 { height: 50px; }
th,
td {
  padding: 0;
  vertical-align: bottom;
  text-align: center;
  white-space: nowrap;
  font-weight: 400;
}
td {
  background: #fff;
  box-shadow: inset -1px -1px 0 #e0e0e0;
}
.letters {
  height: 22px;
}
.letters th {
  color: #555;
  background: linear-gradient(#f0f0f0, #cfcfcf) right / 1px 100% no-repeat;
  box-shadow: inset 0 -1px 0 #a6a6a6;
}
.letters .partial {
  padding-right: 16px;
}
.letters .corner {
  background: none;
  text-align: right;
  line-height: 14px;
  padding-right: 3px;
}
.rh {
  color: #555;
  background: #f0f0f0;
  box-shadow: inset -1px 0 0 #a6a6a6, inset 0 -1px 0 #dcdcdc;
}
td.over {
  box-shadow: inset 0 -1px 0 #000, inset -1px 0 0 #e0e0e0;
}
td.edge {
  box-shadow: inset -1px 0 0 #000, inset 0 -1px 0 #e0e0e0;
}
td.k,
td.title {
  box-shadow: inset -1px -1px 0 #000;
}
.title {
  vertical-align: middle;
  font: bold 16px/18px "Liberation Sans", Arial, sans-serif;
}
td.head {
  position: relative;
  vertical-align: middle;
  background: #83cceb;
  font: bold 14px/18px "Liberation Sans", Arial, sans-serif;
}
td.head.strong {
  background: #45b0e1;
}
td.head.no {
  vertical-align: bottom;
  text-align: left;
  padding-left: 2px;
  font-weight: 400;
}
.num {
  font: 16px/18px "Liberation Sans", Arial, sans-serif;
}
.pre {
  white-space: pre-line;
}
.filter {
  position: absolute;
  right: 1px;
  bottom: 2px;
  width: 17px;
  height: 17px;
  display: flex;
  align-items: center;
  justify-content: center;
  border: 1px solid #a9a9b4;
  background: linear-gradient(#fff, #eef1f6);
}
</style>
